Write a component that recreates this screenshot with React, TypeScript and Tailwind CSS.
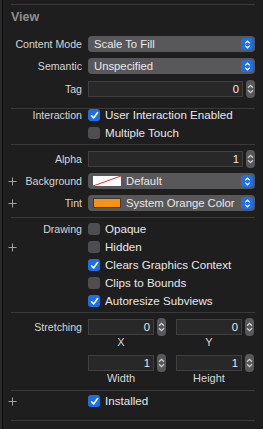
import React from "react";

const font = { fontFamily: '"Liberation Sans", Arial, sans-serif' };

function Sep({ className = "" }: { className?: string }) {
  return <div className={`h-px bg-[#3a3a3a] ${className}`} />;
}

function Plus() {
  return (
    <svg width="9" height="9" viewBox="0 0 9 9" className="-ml-[3px] shrink-0">
      <path d="M4.5 0.5v8M0.5 4.5h8" stroke="#a3a3a3" strokeWidth="1" />
    </svg>
  );
}

function Row({
  label,
  plus,
  h,
  children,
}: {
  label?: string;
  plus?: boolean;
  h: string;
  children?: React.ReactNode;
}) {
  return (
    <div className={`flex items-center ${h}`}>
      <div className="flex w-[71px] shrink-0 items-center">
        {plus && <Plus />}
        <span className="ml-auto whitespace-nowrap text-[10.6px] text-[#d6d6d6]">{label}</span>
      </div>
      <div className="ml-[6px] flex flex-1 items-center">{children}</div>
    </div>
  );
}

function Chevrons({ color }: { color: string }) {
  return (
    <svg width="7" height="10" viewBox="0 0 7 10">
      <path d="M1 3.8L3.5 1.3L6 3.8M1 6.2L3.5 8.7L6 6.2" fill="none" stroke={color} strokeWidth="1.3" />
    </svg>
  );
}

function Popup({ children }: { children: React.ReactNode }) {
  return (
    <div className="flex h-[16px] w-full items-center rounded-[4px] bg-[#58585a] pl-[6px] pr-[2px] text-[#e8e8e8]">
      <div className="flex flex-1 items-center">{children}</div>
      <div className="flex h-[12px] w-[12px] items-center justify-center rounded-[3px] bg-[#1e6fe4]">
        <svg width="7" height="9" viewBox="0 0 7 9">
          <path d="M1.2 3.4L3.5 1.2L5.8 3.4M1.2 5.6L3.5 7.8L5.8 5.6" fill="none" stroke="#ffffff" strokeWidth="1.2" />
        </svg>
      </div>
    </div>
  );
}

function Stepper() {
  return (
    <div className="flex h-[18px] w-[9px] shrink-0 items-center justify-center rounded-[4px] bg-[#58585a]">
      <Chevrons color="#cfcfcf" />
    </div>
  );
}

function NumField({ value, width }: { value: string; width: string }) {
  return (
    <div className="flex items-center">
      <div
        className={`flex h-[16px] ${width} items-center justify-end border border-[#404040] bg-[#282828] pr-[3px] text-[#e8e8e8]`}
      >
        {value}
      </div>
      <div className="ml-[3px]">
        <Stepper />
      </div>
    </div>
  );
}

function Check({ checked, label }: { checked?: boolean; label: string }) {
  return (
    <div className="flex items-center">
      {checked ? (
        <div className="flex h-[12px] w-[12px] items-center justify-center rounded-[3px] bg-[#1e6fe4]">
          <svg width="9" height="9" viewBox="0 0 9 9">
            <path d="M1.6 4.8L3.6 7L7.6 1.6" fill="none" stroke="#ffffff" strokeWidth="1.6" strokeLinecap="round" strokeLinejoin="round" />
          </svg>
        </div>
      ) : (
        <div className="h-[12px] w-[12px] rounded-[3px] bg-[#4e4e50]" />
      )}
      <span className="ml-[5px] whitespace-nowrap text-[11.6px] text-[#e8e8e8]">{label}</span>
    </div>
  );
}

export default function App() {
  return (
    <div className="flex h-[429px] w-[263px] bg-[#1e1e1e] text-[11.3px] leading-[14px]" style={font}>
      <div className="w-[2px] bg-[#2a2a2a]" />
      <div className="w-px bg-[#0c0c0c]" />
      <div className="flex flex-1 flex-col pl-[8px] pr-[8px] pt-[4px]">
        <Sep />
        {/* Title */}
        <div className="h-[28px] pt-[4px] text-[12.5px] font-bold leading-[16px] text-[#8f8f8f]">View</div>

        <Row label="Content Mode" h="h-[22px]">
          <Popup>Scale To Fill</Popup>
        </Row>
        <Row label="Semantic" h="h-[22px]">
          <Popup>Unspecified</Popup>
        </Row>
        <Row label="Tag" h="h-[23px]">
          <NumField value="0" width="w-[155px]" />
        </Row>

        <Sep className="mt-[8px]" />

        <div className="-mt-[3px]">
          <Row label="Interaction" h="h-[18px]">
            <Check checked label="User Interaction Enabled" />
          </Row>
          <Row h="h-[18px]">
            <Check label="Multiple Touch" />
          </Row>
        </div>

        <Sep className="mt-[2px]" />

        <div className="mt-[3px]">
          <Row label="Alpha" h="h-[22px]">
            <NumField value="1" width="w-[155px]" />
          </Row>
          <Row label="Background" plus h="h-[22px]">
            <Popup>
              <div className="h-[10px] w-[28px] -ml-[1px] overflow-hidden bg-white">
                <svg width="28" height="10" viewBox="0 0 28 10">
                  <path d="M0 10L28 0" stroke="#e0302a" strokeWidth="1" />
                </svg>
              </div>
              <span className="ml-[5px]">Default</span>
            </Popup>
          </Row>
          <Row label="Tint" plus h="h-[22px]">
            <Popup>
              <div className="-ml-[1px] h-[10px] w-[28px] border border-[#3a3a3a] bg-[#f7930c]" />
              <span className="ml-[5px] whitespace-nowrap">System Orange Color</span>
            </Popup>
          </Row>
        </div>

        <Sep className="mt-[3px]" />

        <div className="mt-[2px]">
          <Row label="Drawing" h="h-[18px]">
            <Check label="Opaque" />
          </Row>
          <Row plus h="h-[18px]">
            <Check label="Hidden" />
          </Row>
          <Row h="h-[18px]">
            <Check checked label="Clears Graphics Context" />
          </Row>
          <Row h="h-[18px]">
            <Check label="Clips to Bounds" />
          </Row>
          <Row h="h-[18px]">
            <Check checked label="Autoresize Subviews" />
          </Row>
        </div>

        <Sep className="mt-[2px]" />

        <div className="mt-[6px]">
          <Row label="Stretching" h="h-[16px]">
            <div className="flex gap-[10px]">
              <NumField value="0" width="w-[66px]" />
              <NumField value="0" width="w-[66px]" />
            </div>
          </Row>
          <Row h="h-[14px]">
            <div className="flex gap-[22px] text-[11px] text-[#d6d6d6]">
              <div className="w-[66px] text-center">X</div>
              <div className="w-[66px] text-center">Y</div>
            </div>
          </Row>
          <div className="mt-[6px]">
            <Row h="h-[16px]">
              <div className="flex gap-[10px]">
                <NumField value="1" width="w-[66px]" />
                <NumField value="1" width="w-[66px]" />
              </div>
            </Row>
          </div>
          <Row h="h-[14px]">
            <div className="flex gap-[22px] text-[11px] text-[#d6d6d6]">
              <div className="w-[66px] text-center">Width</div>
              <div className="w-[66px] text-center">Height</div>
            </div>
          </Row>
        </div>

        <Sep className="mt-[5px]" />

        <div className="mt-[1px]">
          <Row plus h="h-[18px]">
            <Check checked label="Installed" />
          </Row>
        </div>

        <Sep className="mt-[10px]" />
      </div>
    </div>
  );
}
